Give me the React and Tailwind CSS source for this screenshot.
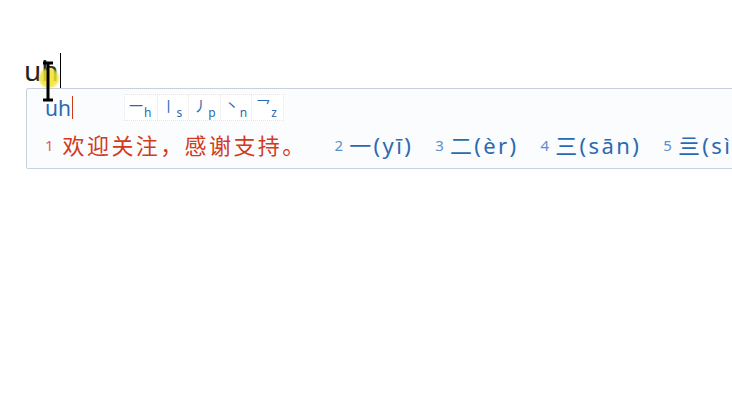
import React from "react";

const strokes = [
  { g: "一", k: "h" },
  { g: "丨", k: "s" },
  { g: "丿", k: "p" },
  { g: "丶", k: "n" },
  { g: "乛", k: "z" },
];

const cands = [
  { n: "2", t: "一(yī)" },
  { n: "3", t: "二(èr)" },
  { n: "4", t: "三(sān)" },
  { n: "5", t: "亖(sì)" },
];

export default function App() {
  return (
    <div className="relative w-[732px] h-[400px] overflow-hidden bg-white font-['Noto_Sans','Noto_Sans_CJK_SC',sans-serif]">
      <div className="flex items-center pl-[24px] pt-[52px] h-[88px]">
        <span className="text-[28px] leading-[35px] text-[#222]">uh</span>
        <span className="ml-[1px] w-px h-[35px] bg-black" />
      </div>

      <div className="ml-[26px] w-[760px] h-[81px] rounded-[2px] border border-[#c8d1dd] bg-[#fbfcfe]">
        <div className="flex items-center h-[34px] pl-[18px] pt-[3px]">
          <span className="text-[21px] leading-[26px] text-[#2a6ab2]">uh</span>
          <span className="ml-[1px] w-px h-[23px] bg-[#d0391c]" />
          <div className="ml-[51px] flex h-[27px] border border-dotted border-[#e1e6ee] bg-white">
            {strokes.map((s, i) => (
              <div
                key={s.k}
                className={`relative w-[31.6px] h-full ${i > 0 ? "border-l border-dotted border-[#e1e6ee]" : ""}`}
              >
                <span className="absolute left-[4px] top-[2px] text-[14px] leading-[16px] text-[#2a6ab2] font-['Noto_Sans_CJK_SC',sans-serif]">
                  {s.g}
                </span>
                <span className="absolute left-[19px] top-[11px] text-[12px] leading-[13px] text-[#2a6ab2]">
                  {s.k}
                </span>
              </div>
            ))}
          </div>
        </div>
        <div className="flex items-center h-[44px] pl-[18px] whitespace-nowrap">
          <span className="text-[15px] text-[#e0604a] mr-[9px]">1</span>
          <span className="text-[22px] tracking-[2.4px] text-[#d23a1a] mr-[28px]">欢迎关注，感谢支持。</span>
          {cands.map((c) => (
            <span key={c.n} className="flex items-center mr-[22px]">
              <span className="text-[15px] text-[#5b8fcc] mr-[6px]">{c.n}</span>
              <span className="text-[22px] tracking-[2.4px] text-[#2a6ab2]">{c.t}</span>
            </span>
          ))}
        </div>
      </div>

      <div className="absolute left-[39px] top-[68px] w-[20px] h-[20px] rounded-full bg-[#f3e22a]/85 blur-[1px]" />
      <svg className="absolute left-[42px] top-[61px]" width="12" height="41" viewBox="0 0 12 41">
        <path d="M1 2 H11 M6 2 V39 M1 39 H11" stroke="#000" strokeWidth="3" fill="none" />
      </svg>
    </div>
  );
}
